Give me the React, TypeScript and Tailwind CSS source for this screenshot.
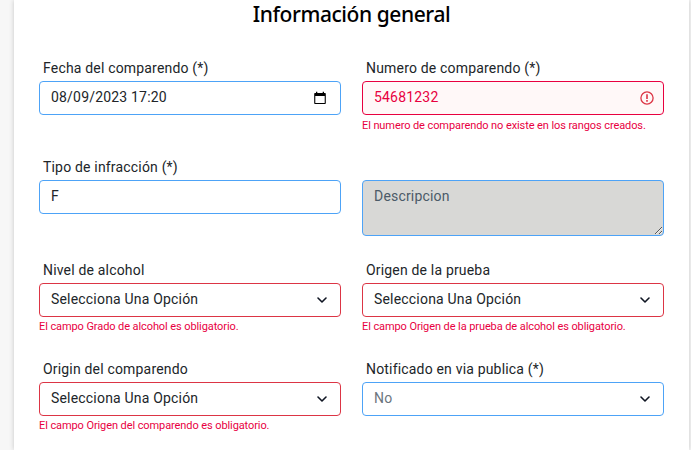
import type { ReactNode } from 'react';
import clsx from 'clsx';

const CONTROL = 'block w-full rounded-[4px] border pl-[11px] text-[14px] tracking-[0.19px] outline-none';

interface FieldProps {
  label?: string;
  error?: string;
  errorClass?: string;
  children: ReactNode;
}

function Field({ label, error, errorClass = 'mt-[3px]', children }: FieldProps) {
  return (
    <div className="flex flex-col">
      <label className="mb-[3px] h-5 pl-1 text-[14px] leading-5 tracking-[0.18px] text-[#212529]">{label}</label>
      {children}
      {error && (
        <p className={clsx('text-[11px] leading-[14px] tracking-[-0.09px] text-[#e8003f]', errorClass)}>{error}</p>
      )}
    </div>
  );
}

interface SelectProps {
  value: string;
  invalid?: boolean;
  disabled?: boolean;
}

function Select({ value, invalid, disabled }: SelectProps) {
  return (
    <div
      className={clsx(
        CONTROL,
        'flex h-[34px] items-center justify-between pr-[12px] pb-px',
        invalid ? 'border-[#dc3545]' : 'border-[#4da3f7]',
        disabled ? 'text-[#6c757d]' : 'text-[#212529]'
      )}
      role="combobox"
    >
      <span>{value}</span>
      <svg className="mt-px h-3 w-3" viewBox="0 0 12 12" fill="none" stroke="#0f1522" strokeWidth="1.6" strokeLinecap="round" strokeLinejoin="round">
        <path d="m2 4 4 4 4-4" />
      </svg>
    </div>
  );
}

function CalendarIcon() {
  return (
    <svg className="mt-px h-[14px] w-[14px]" viewBox="0 0 14 14" fill="#000">
      <path d="M3 .8h1.3v1.2h5.4V.8H11v1.2h1c.5 0 .8.3.8.8v9.4c0 .5-.3.8-.8.8H2c-.5 0-.8-.3-.8-.8V2.8c0-.5.3-.8.8-.8h1zM2.3 5v6.9h9.4V5z" />
    </svg>
  );
}

function AlertIcon() {
  return (
    <svg className="mt-px h-[14px] w-[14px]" viewBox="0 0 14 14" fill="none" stroke="#dc3545" strokeWidth="1.3">
      <circle cx="7" cy="7" r="6.1" />
      <path d="M7 3.3v4.6M7 9.1v1.6" strokeWidth="1.6" />
    </svg>
  );
}

export default function App() {
  return (
    <div className="flex h-[450px] w-[691px] overflow-hidden bg-[#f7f7f7] pr-[2px] pl-[14px] font-['Roboto',sans-serif]">
      <main className="flex-1 bg-white px-[25px] shadow-[0_0_5px_rgba(0,0,0,0.2)]">
        <h2 className="h-[58px] text-center font-['Noto_Sans',sans-serif] text-[21px] leading-[28px] font-medium tracking-[-0.43px] text-black">
          Información general
        </h2>
        <div className="grid grid-cols-2 grid-rows-[99px_103px_99px_99px] gap-x-[21px]">
          <Field label="Fecha del comparendo (*)">
            <div className={clsx(CONTROL, 'flex h-[34px] items-center justify-between border-[#4da3f7] pr-[13px] pb-px text-[#212529]')}>
              <span>08/09/2023 17:20</span>
              <CalendarIcon />
            </div>
          </Field>
          <Field
            label="Numero de comparendo (*)"
            error="El numero de comparendo no existe en los rangos creados."
            errorClass="mt-1"
          >
            <div className={clsx(CONTROL, 'flex h-[34px] items-center justify-between border-[#e8003f] bg-[#fff8f8] pr-[9px] pb-px text-[#e8003f]')}>
              <span>54681232</span>
              <AlertIcon />
            </div>
          </Field>

          <Field label="Tipo de infracción (*)">
            <div className={clsx(CONTROL, 'flex h-[34px] items-center border-[#4da3f7] pb-px text-[#212529]')}>F</div>
          </Field>
          <Field>
            <textarea
              className={clsx(CONTROL, 'h-14 resize border-[#4da3f7] bg-[#d8d8d6] pt-[5px] leading-5 placeholder:text-[#4b5a68]')}
              placeholder="Descripcion"
              disabled
            />
          </Field>

          <Field label="Nivel de alcohol" error="El campo Grado de alcohol es obligatorio.">
            <Select value="Selecciona Una Opción" invalid />
          </Field>
          <Field label="Origen de la prueba" error="El campo Origen de la prueba de alcohol es obligatorio.">
            <Select value="Selecciona Una Opción" invalid />
          </Field>

          <Field label="Origin del comparendo" error="El campo Origen del comparendo es obligatorio.">
            <Select value="Selecciona Una Opción" invalid />
          </Field>
          <Field label="Notificado en via publica (*)">
            <Select value="No" disabled />
          </Field>
        </div>
      </main>
    </div>
  );
}
